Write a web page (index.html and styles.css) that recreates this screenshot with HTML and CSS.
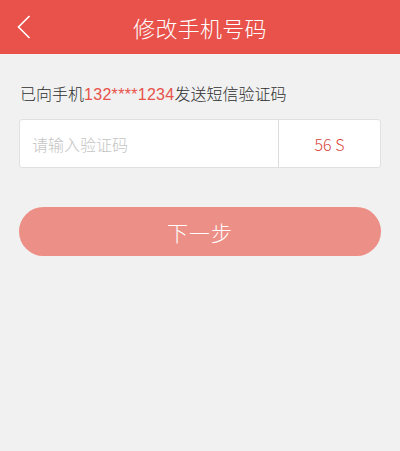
FILE: index.html
```html
<!DOCTYPE html>
<html lang="zh-CN">
<head>
<meta charset="UTF-8">
<meta name="viewport" content="width=device-width, initial-scale=1.0">
<title>修改手机号码</title>
<link rel="stylesheet" href="styles.css">
</head>
<body>
  <header class="topbar">
    <a class="back" href="#">
      <svg width="14" height="24" viewBox="0 0 14 24"><path d="M12.5 1 L1.5 12 L12.5 23" fill="none" stroke="#fff" stroke-width="1.6"/></svg>
    </a>
    <h1>修改手机号码</h1>
  </header>

  <main class="content">
    <p class="tip">已向手机<span class="phone">132****1234</span>发送短信验证码</p>

    <div class="code-box">
      <input type="text" class="code-input" placeholder="请输入验证码">
      <span class="countdown">56 S</span>
    </div>

    <button class="next">下一步</button>
  </main>
</body>
</html>
```

FILE: styles.css
```css
body {
  margin: 0;
  padding: 0;
  background-color: #f1f1f1;
  font-family: "Noto Sans CJK SC", "Noto Sans", sans-serif;
}

.topbar {
  height: 54px;
  background-color: #e8524a;
  display: flex;
  align-items: center;
  justify-content: center;
  position: relative;
}

.topbar h1 {
  margin: 0;
  color: #fff;
  font-size: 22px;
  font-weight: 300;
  letter-spacing: 0.3px;
}

.back {
  position: absolute;
  left: 17px;
  top: 15px;
  display: flex;
}

.content {
  padding: 0 19px 0 19px;
}

.tip {
  margin: 25px 0 0 1px;
  font-size: 16px;
  font-weight: 300;
  line-height: 28px;
  color: #2e2e2e;
}

.phone {
  color: #e8524a;
  font-family: "Liberation Sans", sans-serif;
  letter-spacing: 0.3px;
}

.code-box {
  margin-top: 10px;
  height: 49px;
  display: flex;
  background-color: #fff;
  border: 1px solid #e0e0e0;
  border-radius: 3px;
  box-sizing: border-box;
}

.code-input {
  flex: 1;
  border: none;
  border-right: 1px solid #dcdcdc;
  outline: none;
  background: transparent;
  padding: 0 0 0 12px;
  font-size: 16px;
  font-weight: 300;
  font-family: inherit;
  color: #333;
}

.code-input::placeholder {
  color: #c4c4c4;
}

.countdown {
  width: 101px;
  display: flex;
  align-items: center;
  justify-content: center;
  color: #d9453d;
  font-size: 16px;
  font-weight: 300;
}

.next {
  margin-top: 39px;
  width: 100%;
  height: 49px;
  border: none;
  border-radius: 25px;
  background-color: #ec8f86;
  color: #fff;
  font-size: 21px;
  font-weight: 300;
  font-family: inherit;
  letter-spacing: 1px;
}
```
